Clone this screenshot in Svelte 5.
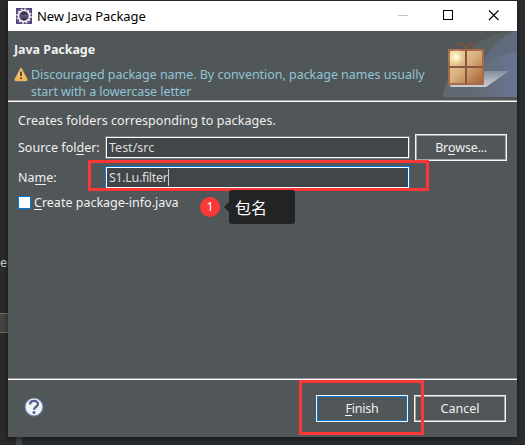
<script>
  let sourceFolder = 'Test/src';
  let packageName = 'S1.Lu.filter';
</script>

<div class="desktop">
  <span class="code">e</span>
  <span class="tab"></span>
  <span class="edge"></span>
  <div class="dialog">
    <div class="titlebar">
      <svg class="app" width="16" height="16" viewBox="0 0 16 16">
        <rect width="16" height="16" fill="#57437c" />
        <circle cx="8" cy="8" r="6.8" fill="none" stroke="#e4e0ea" stroke-width="1.8" stroke-dasharray="2 1.56" />
        <circle cx="8" cy="8" r="5.5" fill="#3a3150" stroke="#f0edf3" stroke-width="1.700" />
        <path d="M3.500 7.200h9M3.500 9h9" stroke="#8d83a5" stroke-width=".7" />
      </svg>
      <span class="title">New Java Package</span>
      <svg class="controls" width="120" height="30" viewBox="0 0 120 30">
        <path d="M1 14.500h10" stroke="#c6c6c6" />
        <rect x="46.500" y="9.500" width="9" height="9" fill="none" stroke="#000" />
        <path d="M92 9.500l9.500 9.500M101.500 9.500l-9.500 9.500" stroke="#000" stroke-width="1.100" />
      </svg>
    </div>

    <div class="header">
      <div class="heading">Java Package</div>
      <div class="warning">
        <svg width="14" height="15" viewBox="0 0 14 15">
          <defs>
            <linearGradient id="warn" x2="0" y2="1"><stop stop-color="#ffe9b0" /><stop offset="1" stop-color="#efae42" /></linearGradient>
          </defs>
          <path d="M7 1.200L13 12.500Q13 13.500 12 13.500H2Q1 13.500 1 12.500Z" fill="url(#warn)" stroke="#e9b365" stroke-width="1.300" stroke-linejoin="round" />
          <path d="M7 4.500v4.500M7 10.300v1.700" stroke="#4d3a20" stroke-width="1.700" />
        </svg>
        <div class="message"><span class="m1">Discouraged package name. By convention, package names usually</span><br /><span class="m2">start with a lowercase letter</span></div>
      </div>
      <svg class="banner" width="75" height="66" viewBox="0 0 75 66">
        <defs>
          <linearGradient id="b1"><stop stop-color="#62686f" /><stop offset="1" stop-color="#606b80" /></linearGradient>
          <linearGradient id="b2"><stop stop-color="#626970" /><stop offset="1" stop-color="#687594" /></linearGradient>
          <linearGradient id="shade" x2="0" y2="1"><stop stop-color="#858e9f" /><stop offset="1" stop-color="#ced0d5" /></linearGradient>
          <linearGradient id="box" x2="1" y2="1"><stop stop-color="#f3dfaa" /><stop offset=".5" stop-color="#d6ad7b" /><stop offset="1" stop-color="#a65b34" /></linearGradient>
          <radialGradient id="glow"><stop stop-color="#fffef4" /><stop offset=".35" stop-color="#fff5c6" stop-opacity=".8" /><stop offset="1" stop-color="#ffe9ad" stop-opacity="0" /></radialGradient>
        </defs>
        <path d="M0 66C6 30 34 3 75 0V66Z" fill="#596064" />
        <path d="M0 66C3 56 8 45 15 35L41 30C48 17 59 5 75 0V66Z" fill="url(#b1)" />
        <path d="M30 66C30 44 45 24 75 21V66Z" fill="url(#b2)" />
        <path d="M41 40H67L44 56H9L7 53Z" fill="url(#shade)" />
        <path d="M20 18.500C14 17 14.500 12.500 18 12.500C22 12.500 24 16 24 19C24 16 26 12.500 30 12.500C33.500 12.500 34 17 28 18.500" fill="none" stroke="#81513e" stroke-width="1.600" />
        <rect x="7" y="19" width="34" height="34" fill="url(#box)" stroke="#a66b4c" stroke-width="2" />
        <circle cx="14" cy="26" r="8" fill="url(#glow)" />
        <path d="M24 19v34M7 36h34" stroke="#895640" stroke-width="2" />
      </svg>
    </div>

    <div class="body">
      <div class="intro">Creates folders corresponding to packages.</div>
      <div class="row source">
        <span class="label">Source fol<u>d</u>er:</span>
        <div class="field"><span class="v1">{sourceFolder}</span></div>
        <div class="button browse"><span>Br<u>o</u>wse...</span></div>
      </div>
      <div class="row name">
        <span class="label">Na<u>m</u>e:</span>
        <div class="field active"><span class="v2">{packageName}</span><i></i></div>
      </div>
      <div class="check"><span class="box"></span><span class="ct"><u>C</u>reate package-info.java</span></div>
    </div>

    <div class="footer">
      <svg width="20" height="20" viewBox="0 0 20 20">
        <circle cx="10" cy="10" r="9" fill="#f1f2f3" stroke="#6680a8" stroke-width="1.200" />
        <path d="M6 7.400C6 2.600 14 2.700 14 7C14 9.800 10 9.800 10 12.800" fill="none" stroke="#4c6089" stroke-width="2.300" />
        <circle cx="10" cy="15.500" r="1.500" fill="#4c6089" />
      </svg>
      <div class="button finish"><span><u>F</u>inish</span></div>
      <div class="button cancel"><span>Cancel</span></div>
    </div>
  </div>

  <div class="mark mark-name"></div>
  <div class="mark mark-finish"></div>
  <div class="badge">1</div>
  <div class="tip">包名</div>
</div>

<style>
  .desktop { position: relative; box-sizing: border-box; width: 525px; height: 445px; padding: 1px 8px 8px; overflow: hidden;
    background: linear-gradient(90deg, #2b2b2b 0 16px, #2b2f32 16px); font: 12.5px/17px "Noto Sans", "Open Sans", sans-serif; color: #f0f0f0; }
  .code { position: absolute; left: 0; top: 255px; font: 12px/16px "DejaVu Sans Mono", monospace; color: #ccc; }
  .tab { position: absolute; left: 0; top: 313px; width: 8px; height: 18px; background: #454545; border: solid #77775e; border-width: 1px 0; }
  .edge { position: absolute; left: 16px; top: 437px; width: 6px; height: 8px; background: #45494c; }
  .dialog { position: relative; display: flex; flex-direction: column; width: 509px; height: 436px; background: #515658; box-shadow: 0 2px 6px #0008; }
  .dialog span, .intro, .heading { white-space: nowrap; }
  .titlebar { display: flex; align-items: center; height: 30px; background: #fff; color: #000; }
  .app { margin: 0 5px 0 8px; }
  .title { font-size: 13px; letter-spacing: -.05px; }
  .controls { margin-left: auto; }
  .header { position: relative; box-sizing: border-box; height: 71px; padding: 10px 0 0 6px; border-bottom: 1px solid #fff; box-shadow: inset 0 -1px #a0a0a0; }
  .heading { font-weight: 700; line-height: 17px; letter-spacing: -.06px; }
  .warning { display: flex; gap: 3px; color: #8fc5d6; margin-top: 8px; }
  .warning svg { margin-top: 1px; }
  .message { line-height: 17px; letter-spacing: -.035px; }
  .m2 { letter-spacing: -.07px; }
  .banner { position: absolute; right: 0; top: 0; }
  .body { height: 277px; padding: 10px 10px 0; box-sizing: border-box; }
  .intro { letter-spacing: .07px; }
  .row { display: flex; align-items: center; }
  .label { width: 87px; }
  .source { height: 27px; margin-top: 5px; }
  .name { height: 23px; margin-top: 5px; }
  .field { display: flex; align-items: center; box-sizing: border-box; width: 305px; height: 23px; border: 1px solid #777b7d; box-shadow: inset 0 0 0 1px #fff; background: #414649; padding-left: 3px; color: #ddd; }
  .field.active { border-color: #0078d7; }
  .v2 { letter-spacing: -.33px; }
  .field i { width: 1px; height: 17px; background: #ccc; }
  .button { display: flex; align-items: center; justify-content: center; box-sizing: border-box; width: 92px; height: 27px; border: 1px solid #f4f4f4; box-shadow: inset 0 0 0 1px #a5a5a5; }
  .browse { margin-left: 5px; letter-spacing: -.25px; }
  u { text-decoration: none; box-shadow: 0 1px #f0f0f0; display: inline-block; height: 15px; line-height: 17px; vertical-align: top; }
  .check { display: flex; align-items: center; gap: 3px; margin-top: 5px; height: 17px; }
  .box { box-sizing: border-box; width: 13px; height: 13px; background: #fff; border: 1px solid #0078d7; }
  .footer { display: flex; box-sizing: border-box; height: 58px; border-top: 1px solid #fff; box-shadow: 0 -1px #999; padding: 15px 11px 0 16px; }
  .footer svg { margin-top: 2px; }
  .finish { margin-left: auto; box-shadow: inset 0 0 0 1px #0078d7; letter-spacing: -.2px; }
  .cancel { margin-left: 6px; }
  .mark { position: absolute; box-sizing: border-box; border: 3px solid #fb3838; }
  .mark-name { left: 88px; top: 160px; width: 341px; height: 31px; }
  .mark-finish { left: 299px; top: 380px; width: 125px; height: 55px; }
  .badge { position: absolute; left: 200px; top: 197px; width: 20px; height: 20px; border-radius: 50%; background: #fb3838; color: #fff; text-align: center; line-height: 20px; }
  .tip { position: absolute; left: 229px; top: 190px; box-sizing: border-box; width: 66px; height: 34px; padding-left: 6px; border-radius: 3px; background: #222325; color: #fff; font: 16px/34px "Noto Sans CJK SC", sans-serif; }
  .tip::before { content: ""; position: absolute; left: -5px; top: 12px; border: 5px solid transparent; border-left: 0; border-right-color: #222325; }
</style>
